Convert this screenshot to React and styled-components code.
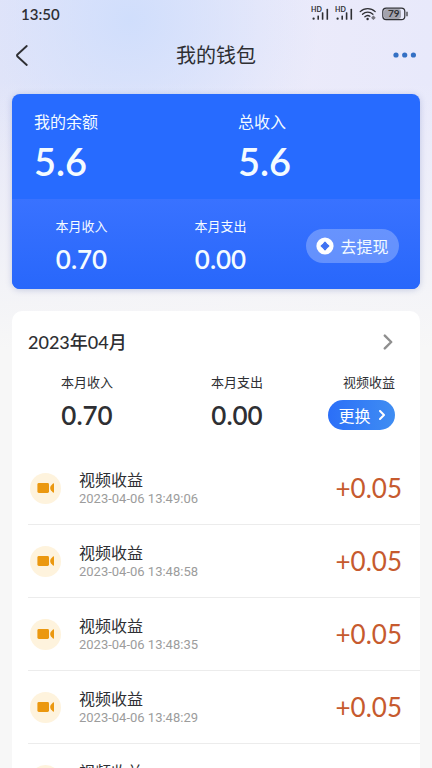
import React from "react";
import styled, { createGlobalStyle } from "styled-components";

//colors
const Blue = "#276bff";
const Ink = "#2e2f33";
const Orange = "#c65a2e";

const records = [
  { id: 1, title: "视频收益", time: "2023-04-06 13:49:06", amount: "+0.05" },
  { id: 2, title: "视频收益", time: "2023-04-06 13:48:58", amount: "+0.05" },
  { id: 3, title: "视频收益", time: "2023-04-06 13:48:35", amount: "+0.05" },
  { id: 4, title: "视频收益", time: "2023-04-06 13:48:29", amount: "+0.05" },
  { id: 5, title: "视频收益", time: "", amount: "" },
];

function SignalIcon() {
  return (
    <svg width="19" height="16" viewBox="0 0 19 16" aria-hidden="true">
      <text x="0" y="6" fontSize="7" fontWeight="700" fill={Ink}>
        HD
      </text>
      <g fill={Ink}>
        <rect x="1.5" y="11.5" width="2.2" height="2.2" rx="1" />
        <rect x="6.4" y="9.5" width="1.6" height="4.3" rx="0.6" />
        <rect x="10.8" y="6.2" width="1.6" height="7.6" rx="0.6" />
        <rect x="15.5" y="2.8" width="1.6" height="11" rx="0.6" />
      </g>
    </svg>
  );
}

function WifiIcon() {
  return (
    <svg width="18" height="14" viewBox="0 0 18 14" aria-hidden="true">
      <g fill="none" stroke={Ink} strokeWidth="1.3" strokeLinecap="round">
        <path d="M1.2 4.6C5.4.6 12 .6 16.2 4.6" />
        <path d="M3.5 7.3c3-2.8 7.4-2.8 10.4 0" />
        <path d="M5.9 9.8c1.6-1.5 3.5-1.6 5-.6" />
      </g>
      <circle cx="8.6" cy="12" r="1.2" fill={Ink} />
      <circle cx="14.4" cy="10.8" r="1.7" fill="#77777f" />
      <path
        d="M14.4 8.6v4.4M12.2 10.8h4.4"
        stroke="#77777f"
        strokeWidth="0.8"
      />
    </svg>
  );
}

function BatteryIcon() {
  return (
    <svg width="26" height="14" viewBox="0 0 26 14" aria-hidden="true">
      <rect x="2" y="2" width="17" height="10" rx="2.4" fill="#a3a3ad" />
      <rect
        x="0.8"
        y="1.2"
        width="22"
        height="11.4"
        rx="3.4"
        fill="none"
        stroke={Ink}
        strokeWidth="1.2"
      />
      <path d="M25 4.8v4.4" stroke={Ink} strokeWidth="1.2" />
      <text
        x="11.8"
        y="10.4"
        fontSize="10"
        fontWeight="700"
        textAnchor="middle"
        fill={Ink}
      >
        79
      </text>
    </svg>
  );
}

function CoinIcon() {
  return (
    <svg width="18" height="18" viewBox="0 0 18 18" aria-hidden="true">
      <circle cx="9" cy="9" r="8.6" fill="#fff" />
      <path
        d="M9 5.2l1.8 2L12.8 9l-2 1.8L9 12.8l-1.8-2L5.2 9l2-1.8z"
        fill="#3f72f2"
        stroke="#3f72f2"
        strokeWidth="1.2"
        strokeLinejoin="round"
      />
    </svg>
  );
}

function VideoIcon() {
  return (
    <svg width="18" height="12" viewBox="0 0 18 12" aria-hidden="true">
      <rect x="0.4" y="1" width="11.6" height="10" rx="1.4" fill="#eb980f" />
      <path
        d="M17 1.9v8.2c0 .5-.6.8-1 .4l-2.1-2.3c-.5-.6-.7-1.3-.7-2.2s.2-1.6.7-2.2l2.1-2.3c.4-.4 1-.1 1 .4z"
        fill="#eb980f"
      />
    </svg>
  );
}

function Chevron({ width, height, stroke, strokeWidth, left }) {
  return (
    <svg width={width} height={height} viewBox="0 0 12 20" aria-hidden="true">
      <path
        d={left ? "M11 1L2.2 9Q1.3 10 2.2 11L11 19" : "M2 2l8 8-8 8"}
        fill="none"
        stroke={stroke}
        strokeWidth={strokeWidth}
        strokeLinecap="round"
        strokeLinejoin="round"
      />
    </svg>
  );
}

function App() {
  return (
    <Page>
      <GlobalStyle />
      <StatusBar>
        <span>13:50</span>
        <StatusIcons>
          <SignalIcon />
          <SignalIcon />
          <WifiIcon />
          <BatteryIcon />
        </StatusIcons>
      </StatusBar>

      <NavBar>
        <IconButton aria-label="返回">
          <Chevron width={13} height={21} stroke={Ink} strokeWidth={1.8} left />
        </IconButton>
        <h1>我的钱包</h1>
        <IconButton aria-label="更多" $end>
          <svg width="24" height="6" viewBox="0 0 24 6" aria-hidden="true">
            <g fill="#3470c4">
              <circle cx="3" cy="3" r="2.6" />
              <circle cx="11.7" cy="3" r="2.6" />
              <circle cx="20.4" cy="3" r="2.6" />
            </g>
          </svg>
        </IconButton>
      </NavBar>

      <BalanceCard>
        <Totals>
          <Total>
            <TotalLabel>我的余额</TotalLabel>
            <TotalValue>5.6</TotalValue>
          </Total>
          <Total>
            <TotalLabel>总收入</TotalLabel>
            <TotalValue>5.6</TotalValue>
          </Total>
        </Totals>
        <MonthStrip>
          <Stat>
            <StatLabel>本月收入</StatLabel>
            <StatValue>0.70</StatValue>
          </Stat>
          <Stat>
            <StatLabel>本月支出</StatLabel>
            <StatValue>0.00</StatValue>
          </Stat>
          <WithdrawButton>
            <CoinIcon />
            去提现
          </WithdrawButton>
        </MonthStrip>
      </BalanceCard>

      <Sheet>
        <MonthHeader>
          <h2>2023年04月</h2>
          <IconButton aria-label="选择月份">
            <Chevron width={10} height={16} stroke="#8f8f8f" strokeWidth={3} />
          </IconButton>
        </MonthHeader>
        <MonthStats>
          <Stat>
            <StatLabel>本月收入</StatLabel>
            <StatValue>0.70</StatValue>
          </Stat>
          <Stat>
            <StatLabel>本月支出</StatLabel>
            <StatValue>0.00</StatValue>
          </Stat>
          <Stat $end>
            <StatLabel>视频收益</StatLabel>
            <SwitchButton>
              更换
              <Chevron width={6} height={10} stroke="#fff" strokeWidth={4} />
            </SwitchButton>
          </Stat>
        </MonthStats>
        <Records>
          {records.map((item) => (
            <Record key={item.id}>
              <RecordIcon>
                <VideoIcon />
              </RecordIcon>
              <RecordText>
                <RecordTitle>{item.title}</RecordTitle>
                <RecordTime>{item.time}</RecordTime>
              </RecordText>
              <Amount>{item.amount}</Amount>
            </Record>
          ))}
        </Records>
      </Sheet>
    </Page>
  );
}

const GlobalStyle = createGlobalStyle`
  * {
    box-sizing: border-box;
  }
  body {
    margin: 0;
    font-family: Lato, "Noto Sans CJK SC", sans-serif;
    color: ${Ink};
    background: #f7f7f7;
  }
  h1, h2, ul {
    margin: 0;
    padding: 0;
  }
  button {
    border: 0;
    padding: 0;
    background: none;
    font-family: inherit;
    cursor: pointer;
  }
  svg {
    display: block;
    flex-shrink: 0;
  }
`;

const Page = styled.main`
  height: 100vh;
  overflow-y: auto;
  scrollbar-width: none;
  background:
    linear-gradient(to bottom, rgba(247, 247, 247, 0) 80px, #f7f7f7 350px),
    radial-gradient(circle at 30% 20px, #d0defc 0, rgba(208, 222, 252, 0) 190px),
    linear-gradient(to right, #e5e6f8, #ecebfa 60%, #e8e9fb);
`;

const StatusBar = styled.div`
  display: flex;
  justify-content: space-between;
  align-items: center;
  height: 28px;
  padding: 0 24px 0 21px;
  font-size: 15px;
  font-weight: 600;
`;

const StatusIcons = styled.div`
  display: flex;
  align-items: center;
  gap: 5px;
`;

const NavBar = styled.header`
  display: grid;
  grid-template-columns: 1fr auto 1fr;
  align-items: center;
  height: 54px;
  padding: 0 15px;

  h1 {
    font-size: 20px;
    font-weight: 400;
    line-height: 28px;
  }
`;

const IconButton = styled.button`
  display: flex;
  justify-self: ${(props) => (props.$end ? "end" : "start")};
`;

const BalanceCard = styled.section`
  margin: 12px 12px 0;
  border-radius: 8px;
  overflow: hidden;
  color: #f4fbff;
  background: ${Blue};
  box-shadow: 0 1px 6px rgba(60, 80, 160, 0.25);
`;

const Totals = styled.div`
  display: grid;
  grid-template-columns: 1fr 1fr;
  padding: 18px 0;
`;

const Total = styled.div`
  display: flex;
  flex-direction: column;
  gap: 9px;
  padding-left: 22px;
`;

const TotalLabel = styled.span`
  font-size: 16px;
  line-height: 20px;
`;

const TotalValue = styled.strong`
  font-size: 38px;
  font-weight: 600;
  line-height: 40px;
`;

const MonthStrip = styled.div`
  display: grid;
  grid-template-columns: 1fr 1fr 130px;
  align-items: center;
  padding: 18px 0 15px;
  background: linear-gradient(to bottom, #3972ff, #2867fb);
`;

const Stat = styled.div`
  display: flex;
  flex-direction: column;
  align-items: ${(props) => (props.$end ? "flex-end" : "center")};
  gap: 9px;
`;

const StatLabel = styled.span`
  font-size: 13px;
  line-height: 18px;
`;

const StatValue = styled.strong`
  font-size: 26px;
  font-weight: 600;
  line-height: 30px;
`;

const WithdrawButton = styled.button`
  display: flex;
  justify-content: center;
  align-items: center;
  gap: 6px;
  width: 93px;
  height: 34px;
  margin-left: 16px;
  border-radius: 17px;
  background: rgba(255, 255, 255, 0.26);
  color: #f4fbff;
  font-size: 16px;
`;

const Sheet = styled.section`
  margin: 22px 12px 0;
  padding: 19px 0 0 16px;
  border-radius: 10px 10px 0 0;
  background: #fff;
`;

const MonthHeader = styled.div`
  display: flex;
  justify-content: space-between;
  align-items: center;
  padding-right: 27px;

  h2 {
    font-size: 18px;
    font-weight: 500;
    line-height: 24px;
  }
`;

const MonthStats = styled.div`
  display: grid;
  grid-template-columns: 118px 1fr auto;
  padding: 19px 25px 22px 0;
`;

const SwitchButton = styled.button`
  display: flex;
  justify-content: center;
  align-items: center;
  gap: 8px;
  width: 67px;
  height: 30px;
  border-radius: 15px;
  background: linear-gradient(to right, #2b6ff8, #3f8df2);
  color: #fff;
  font-size: 16px;
`;

const Records = styled.ul`
  list-style: none;
`;

const Record = styled.li`
  display: flex;
  align-items: center;
  gap: 18px;
  padding: 17px 18px 17px 2px;
  border-bottom: 1px solid #ececec;
`;

const RecordIcon = styled.div`
  display: flex;
  justify-content: center;
  align-items: center;
  width: 31px;
  height: 31px;
  border-radius: 50%;
  background: #fef3dd;
`;

const RecordText = styled.div`
  display: flex;
  flex: 1;
  flex-direction: column;
`;

const RecordTitle = styled.span`
  font-size: 16px;
  line-height: 22px;
`;

const RecordTime = styled.time`
  min-height: 16px;
  color: #9c9c9c;
  font-family: Roboto, sans-serif;
  font-size: 13px;
  line-height: 16px;
`;

const Amount = styled.span`
  color: ${Orange};
  font-size: 26px;
  line-height: 30px;
`;

export default App;
